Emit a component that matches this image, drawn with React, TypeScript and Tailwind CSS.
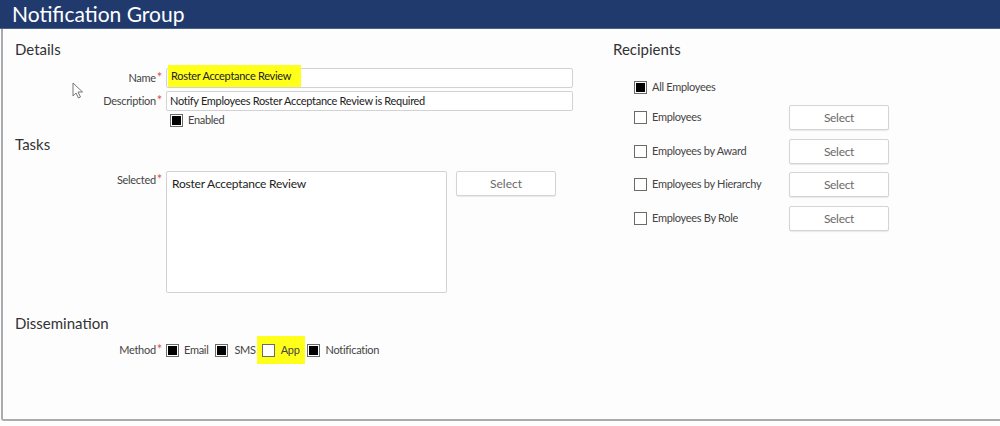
import React from 'react';

function Box({ checked }: { checked?: boolean }) {
  return (
    <span className="inline-flex h-[13px] w-[13px] shrink-0 items-center justify-center border border-[#6b6b6b] bg-white">
      {checked && <span className="h-[9px] w-[9px] bg-black" />}
    </span>
  );
}

function SelectButton({ className = '' }: { className?: string }) {
  return (
    <button
      className={`h-[25px] w-[100px] rounded-[2px] border border-[#d4d4d4] bg-white text-[12px] text-[#6a6a6a] shadow-[0_1px_1px_rgba(0,0,0,0.08)] ${className}`}
    >
      Select
    </button>
  );
}

function Star() {
  return <span className="ml-[1px] text-[13px] leading-none text-[#d9534f]">*</span>;
}

function Label({ text }: { text: string }) {
  return (
    <div className="w-[163px] shrink-0 pr-[4px] text-right text-[11px] tracking-[-0.3px] text-[#444]">
      {text}
      <Star />
    </div>
  );
}

const recipients = [
  { label: 'Employees', mt: 'mt-[5px]' },
  { label: 'Employees by Award', mt: 'mt-[9px]' },
  { label: 'Employees by Hierarchy', mt: 'mt-[8px]' },
  { label: 'Employees By Role', mt: 'mt-[9px]' },
];

export default function App() {
  return (
    <div className="relative h-[426px] w-[1000px] bg-[#fdfdfd] font-['Lato','Open_Sans',sans-serif] text-[#333]">
      <div className="h-[29px] border-b border-[#4b6283] bg-[#213a6e] pl-[12px] text-[21px] leading-[28px] text-white">
        Notification Group
      </div>

      <div className="ml-[1px] flex h-[392px] w-[999px] rounded-bl-[3px] border-b-2 border-l-2 border-[#a8acaf] bg-[#fdfdfd]">
        {/* left column */}
        <div className="w-[610px] pt-[10px]">
          <div className="pl-[12px] text-[15px] leading-[20px]">Details</div>

          <div className="mt-[9px] flex items-center">
            <Label text="Name" />
            <div className="relative h-[20px] w-[407px] rounded-[2px] border border-[#d2d2d2] bg-white">
              <span className="absolute left-[1px] top-[-4px] flex h-[22px] items-center bg-[#ffff1a] pl-[3px] pr-[10px] text-[11px] tracking-[-0.3px] text-[#222]">
                Roster Acceptance Review
              </span>
            </div>
          </div>

          <div className="mt-[3px] flex items-center">
            <Label text="Description" />
            <div className="flex h-[20px] w-[407px] items-center rounded-[2px] border border-[#d2d2d2] bg-white pl-[3px] text-[11px] tracking-[-0.3px] text-[#222]">
              Notify Employees Roster Acceptance Review is Required
            </div>
          </div>

          <div className="mt-[1px] flex h-[17px] items-center pl-[167px] text-[11px] tracking-[-0.3px] text-[#444]">
            <Box checked />
            <span className="ml-[5px]">Enabled</span>
          </div>

          <div className="mt-[5px] pl-[12px] text-[15px] leading-[20px]">Tasks</div>

          <div className="mt-[17px] flex items-start">
            <div className="w-[163px] shrink-0 pr-[4px] pt-[1px] text-right text-[11px] tracking-[-0.3px] text-[#444]">
              Selected
              <Star />
            </div>
            <div className="h-[122px] w-[281px] rounded-[2px] border border-[#d2d2d2] bg-white px-[5px] pt-[3px] text-[12px] tracking-[-0.2px] text-[#222]">
              Roster Acceptance Review
            </div>
            <SelectButton className="ml-[9px]" />
          </div>

          <div className="mt-[20px] pl-[12px] text-[15px] leading-[20px]">Dissemination</div>

          <div className="mt-[3px] flex items-center text-[11px] tracking-[-0.3px] text-[#444]">
            <Label text="Method" />
            <Box checked />
            <span className="ml-[5px]">Email</span>
            <span className="ml-[7px]" />
            <Box checked />
            <span className="ml-[6px]">SMS</span>
            <span className="ml-[1px] flex h-[28px] items-center bg-[#ffff1a] pl-[5px] pr-[5px]">
              <Box />
              <span className="ml-[6px]">App</span>
            </span>
            <span className="ml-[2px]" />
            <Box checked />
            <span className="ml-[6px]">Notification</span>
          </div>
        </div>

        {/* right column */}
        <div className="pt-[10px]">
          <div className="text-[15px] leading-[20px]">Recipients</div>

          <div className="mt-[16px] flex h-[25px] items-center pl-[21px] text-[11px] tracking-[-0.3px] text-[#444]">
            <Box checked />
            <span className="ml-[5px]">All Employees</span>
          </div>

          {recipients.map((r) => (
            <div key={r.label} className={`${r.mt} flex h-[25px] items-center pl-[21px] text-[11px] tracking-[-0.3px] text-[#444]`}>
              <Box />
              <span className="ml-[5px] w-[137px]">{r.label}</span>
              <SelectButton />
            </div>
          ))}
        </div>
      </div>

      {/* mouse cursor */}
      <svg className="absolute left-[72px] top-[82px]" width="12" height="17" viewBox="0 0 12 17">
        <path d="M1 1 L1 14 L4 11 L6.5 16 L8.5 15 L6 10 L10.5 10 Z" fill="white" stroke="#777" strokeWidth="1" strokeLinejoin="round" />
      </svg>
    </div>
  );
}
